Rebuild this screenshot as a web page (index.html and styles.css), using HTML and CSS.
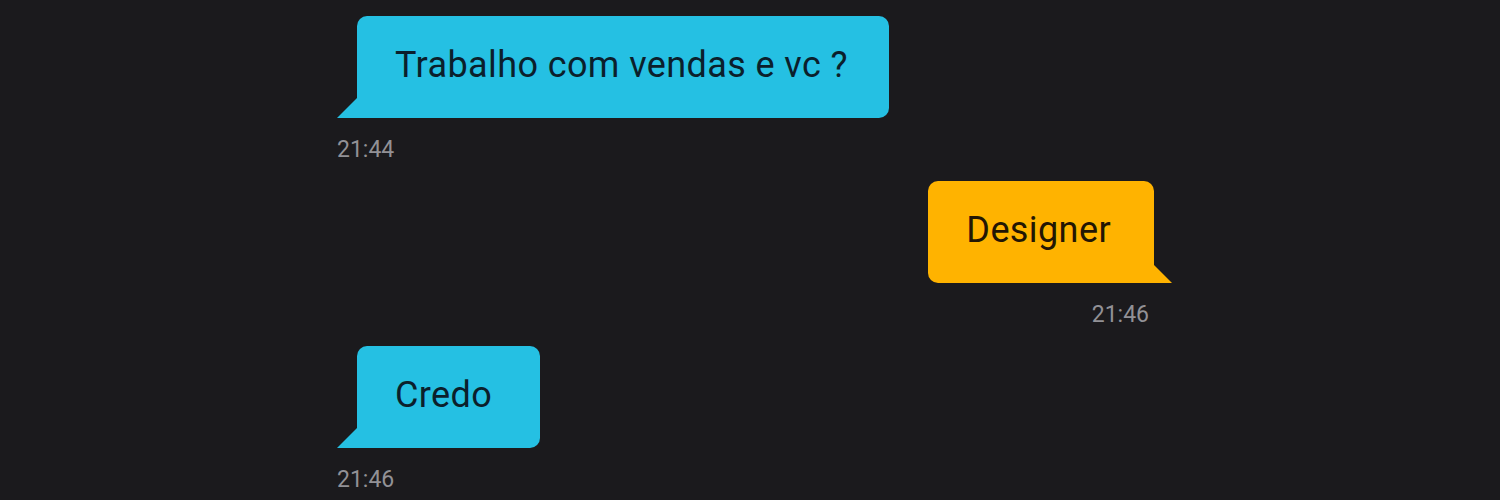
FILE: index.html
```html
<!DOCTYPE html>
<html lang="pt">
<head>
<meta charset="utf-8">
<link rel="stylesheet" href="styles.css">
</head>
<body>
<div class="chat">
  <div class="msg msg-in">
    <div class="bubble">Trabalho com vendas e vc ?</div>
    <div class="time">21:44</div>
  </div>
  <div class="msg msg-out">
    <div class="bubble">Designer</div>
    <div class="time">21:46</div>
  </div>
  <div class="msg msg-in">
    <div class="bubble">Credo</div>
    <div class="time">21:46</div>
  </div>
</div>
</body>
</html>
```
FILE: styles.css
```css
html, body {
  margin: 0;
  padding: 0;
  background: #1b1a1d;
  height: 100%;
  overflow: hidden;
}
.chat {
  width: 835px;
  margin-left: 337px;
  padding-top: 16px;
  display: flex;
  flex-direction: column;
  font-family: Roboto, "DejaVu Sans", sans-serif;
}
.msg {
  display: flex;
  flex-direction: column;
  margin-bottom: 17px;
}
.msg-in {
  align-items: flex-start;
}
.msg-out {
  align-items: flex-end;
}
.bubble {
  position: relative;
  box-sizing: border-box;
  min-width: 183px;
  font-size: 36px;
  font-weight: 400;
  letter-spacing: 0.4px;
  line-height: 40px;
  padding: 29px 41px 33px 38px;
  border-radius: 10px;
  white-space: nowrap;
}
.msg-in .bubble {
  margin-left: 20px;
  background: #25c0e3;
  color: #0b1f2c;
  border-bottom-left-radius: 0;
}
.msg-out .bubble {
  margin-right: 18px;
  background: #ffb300;
  color: #231604;
  border-bottom-right-radius: 0;
  padding-left: 38px;
  padding-right: 43px;
}
.bubble::after {
  content: "";
  position: absolute;
  bottom: 0;
  width: 0;
  height: 0;
  border-style: solid;
}
.msg-in .bubble::after {
  left: -20px;
  border-width: 0 0 20px 20px;
  border-color: transparent transparent #25c0e3 transparent;
}
.msg-out .bubble::after {
  right: -18px;
  border-width: 0 18px 18px 0;
  border-color: transparent transparent #ffb300 transparent;
}
.time {
  margin-top: 18px;
  font-size: 23px;
  line-height: 28px;
  color: #929196;
}
.msg-out .time {
  margin-right: 23px;
}
```
